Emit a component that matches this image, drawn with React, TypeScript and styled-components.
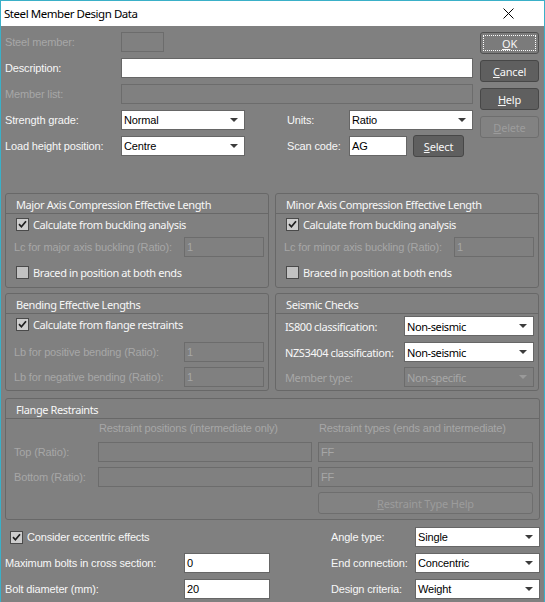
import React from "react";
import styled, { createGlobalStyle, css } from "styled-components";

const MS = `"Liberation Sans", Arial, sans-serif`;
const UI = `"Noto Sans", "Open Sans", sans-serif`;

const BG = "#808080";
const TXT = "#f7f7f7";
const DIS = "#a7a7a7";
const LINE = "#686868";

const Global = createGlobalStyle`
  html, body { margin: 0; padding: 0; background: ${BG}; }
  * { box-sizing: border-box; }
`;

const uiFont = css`
  font-family: ${UI};
  font-size: 11px;
  letter-spacing: -0.4px;
`;

const msFont = css`
  font-family: ${MS};
  font-size: 11px;
  letter-spacing: -0.15px;
`;

const Window = styled.div`
  width: 545px;
  height: 602px;
  background: ${BG};
  border: 1px solid #3ab0c8;
  border-bottom: none;
  display: flex;
  flex-direction: column;
  overflow: hidden;
`;

const TitleBar = styled.div`
  height: 25px;
  flex-shrink: 0;
  background: #fff;
  display: flex;
  align-items: center;
  justify-content: space-between;
  padding: 0 30px 0 3px;
  font-family: ${UI};
  font-size: 11.5px;
  letter-spacing: -0.45px;
  color: #000;
`;

const Body = styled.div`
  display: flex;
  flex-direction: column;
  padding: 6px 4px 0 4px;
`;

const TopSection = styled.div`
  display: flex;
  align-items: flex-start;
  gap: 7px;
`;

const Form = styled.div`
  width: 468px;
  display: flex;
  flex-direction: column;
  gap: 6px;
`;

const Row = styled.div`
  display: flex;
  align-items: center;
  height: 20px;
`;

const Label = styled.span<{ $w?: number; $dis?: boolean; $ui?: boolean; $ml?: number }>`
  ${(p) => (p.$w ? `width: ${p.$w}px; flex-shrink: 0;` : "flex: 1;")}
  margin-left: ${(p) => p.$ml ?? 0}px;
  ${(p) => (p.$ui ? uiFont : msFont)}
  color: ${(p) => (p.$dis ? DIS : TXT)};
  white-space: nowrap;
`;

const fieldBase = css<{ $w?: number; $dis?: boolean }>`
  height: 20px;
  ${(p) => (p.$w ? `width: ${p.$w}px; flex-shrink: 0;` : "flex: 1;")}
  border: 1px solid ${(p) => (p.$dis ? "#6c6c6c" : "#666")};
  background: ${(p) => (p.$dis ? "transparent" : "#fff")};
  color: ${(p) => (p.$dis ? DIS : "#000")};
  ${msFont}
  display: flex;
  align-items: center;
  padding: 0 2px;
  white-space: nowrap;
`;

const TextBox = styled.div<{ $w?: number; $dis?: boolean }>`
  ${fieldBase}
`;

const ComboBox = styled.div<{ $w?: number; $dis?: boolean; $ui?: boolean }>`
  ${fieldBase}
  ${(p) => (p.$ui ? uiFont : "")}
  justify-content: space-between;
  padding-right: 6px;
`;

const Arrow = styled.span<{ $dis?: boolean }>`
  width: 0;
  height: 0;
  border-left: 4px solid transparent;
  border-right: 4px solid transparent;
  border-top: 4px solid ${(p) => (p.$dis ? "#9a9a9a" : "#3c3c3c")};
`;

const ButtonCol = styled.div`
  width: 59px;
  display: flex;
  flex-direction: column;
  gap: 6px;
`;

const Btn = styled.div<{ $w?: number; $kind?: "normal" | "default" | "disabled"; $ml?: number; $grow?: boolean }>`
  height: 22px;
  ${(p) => (p.$w ? `width: ${p.$w}px; flex-shrink: 0;` : "")}
  ${(p) => (p.$grow ? "flex: 1;" : "")}
  margin-left: ${(p) => p.$ml ?? 0}px;
  border-radius: 3px;
  display: flex;
  align-items: stretch;
  ${uiFont}
  letter-spacing: -0.2px;
  ${(p) =>
    p.$kind === "default"
      ? css`
          background: #7b7b7b;
          border: 1px solid #505050;
          color: ${TXT};
          padding: 2px;
        `
      : p.$kind === "disabled"
      ? css`
          background: #828282;
          border: 1px solid #6e6e6e;
          color: #9c9c9c;
          padding: 0;
        `
      : css`
          background: #5f5f5f;
          border: 1px solid #474747;
          color: ${TXT};
          padding: 0;
        `}
`;

const BtnFace = styled.span<{ $focus?: boolean }>`
  flex: 1;
  display: flex;
  align-items: center;
  justify-content: center;
  border: 1px dotted ${(p) => (p.$focus ? "#ffffff" : "transparent")};
`;

const GroupGrid = styled.div`
  margin-top: 37px;
  display: grid;
  grid-template-columns: 264px 264px;
  grid-template-rows: 95px 98px;
  column-gap: 6px;
  row-gap: 5px;
`;

const Group = styled.div<{ $h?: number; $mt?: number }>`
  border: 1px solid ${LINE};
  border-radius: 3px;
  display: flex;
  flex-direction: column;
  ${(p) => (p.$h ? `height: ${p.$h}px;` : "")}
  margin-top: ${(p) => p.$mt ?? 0}px;
`;

const GroupHeader = styled.div`
  height: 20px;
  border-bottom: 1px solid ${LINE};
  padding: 1px 0 0 10px;
  display: flex;
  align-items: center;
  ${uiFont}
  color: ${TXT};
`;

const GroupBody = styled.div<{ $pl?: number }>`
  display: flex;
  flex-direction: column;
  padding: 0 4px 0 ${(p) => p.$pl ?? 8}px;
`;

const FieldRow = styled.div<{ $mt?: number; $h?: number }>`
  display: flex;
  align-items: center;
  height: ${(p) => p.$h ?? 20}px;
  margin-top: ${(p) => p.$mt ?? 0}px;
`;

const CheckRow = styled.label<{ $mt?: number; $pl?: number; $ui?: boolean }>`
  display: flex;
  align-items: center;
  gap: 4px;
  height: 21px;
  margin-top: ${(p) => p.$mt ?? 0}px;
  padding-left: ${(p) => p.$pl ?? 2}px;
  ${(p) => (p.$ui ? uiFont : msFont)}
  color: ${TXT};
  white-space: nowrap;
`;

const Box = styled.span<{ $on?: boolean }>`
  width: 13px;
  height: 13px;
  flex-shrink: 0;
  border: 1px solid #4a4a4a;
  background: ${(p) => (p.$on ? "#cdcdcd" : "#c2c2c2")};
  display: flex;
  align-items: center;
  justify-content: center;
`;

const FlangeBody = styled.div`
  display: grid;
  grid-template-columns: 78px 214px 215px;
  grid-template-rows: 18px 20px 20px 22px;
  column-gap: 6px;
  row-gap: 5px;
  padding: 0 5px 0 8px;
  align-items: center;
`;

const Cell = styled.div<{ $col?: string; $pl?: number }>`
  grid-column: ${(p) => p.$col ?? "auto"};
  padding-left: ${(p) => p.$pl ?? 0}px;
  display: flex;
  align-items: center;
  min-width: 0;
`;

const BottomGrid = styled.div`
  margin-top: 7px;
  display: grid;
  grid-template-columns: 179px 86px 61px 84px 125px;
  grid-template-rows: 20px 20px 20px;
  row-gap: 6px;
  align-items: center;
`;

const Check = ({ on }: { on?: boolean }) => (
  <Box $on={on}>
    {on && (
      <svg width="9" height="9" viewBox="0 0 9 9">
        <path d="M1 4.2 L3.4 6.8 L8 1.2" stroke="#1e1e1e" strokeWidth="1.7" fill="none" />
      </svg>
    )}
  </Box>
);

const Close = () => (
  <svg width="11" height="11" viewBox="0 0 11 11">
    <path d="M0.5 0.5 L10.5 10.5 M10.5 0.5 L0.5 10.5" stroke="#000" strokeWidth="1" />
  </svg>
);

export default function App() {
  return (
    <>
      <Global />
      <Window>
        <TitleBar>
          <span>Steel Member Design Data</span>
          <Close />
        </TitleBar>
        <Body>
          <TopSection>
            <Form>
              <Row>
                <Label $w={116} $dis>Steel member:</Label>
                <TextBox $w={43} $dis />
              </Row>
              <Row>
                <Label $w={116}>Description:</Label>
                <TextBox />
              </Row>
              <Row>
                <Label $w={116} $dis>Member list:</Label>
                <TextBox $dis />
              </Row>
              <Row>
                <Label $w={116}>Strength grade:</Label>
                <ComboBox $w={124}>
                  <span>Normal</span>
                  <Arrow />
                </ComboBox>
                <Label $w={62} $ml={42}>Units:</Label>
                <ComboBox $w={124}>
                  <span>Ratio</span>
                  <Arrow />
                </ComboBox>
              </Row>
              <Row>
                <Label $w={116}>Load height position:</Label>
                <ComboBox $w={124}>
                  <span>Centre</span>
                  <Arrow />
                </ComboBox>
                <Label $w={62} $ml={42}>Scan code:</Label>
                <TextBox $w={58}>AG</TextBox>
                <Btn $w={51} $ml={6}>
                  <BtnFace>
                    <span><u>S</u>elect</span>
                  </BtnFace>
                </Btn>
              </Row>
            </Form>
            <ButtonCol>
              <Btn $kind="default">
                <BtnFace $focus>
                  <span><u>O</u>K</span>
                </BtnFace>
              </Btn>
              <Btn>
                <BtnFace>
                  <span><u>C</u>ancel</span>
                </BtnFace>
              </Btn>
              <Btn>
                <BtnFace>
                  <span><u>H</u>elp</span>
                </BtnFace>
              </Btn>
              <Btn $kind="disabled">
                <BtnFace>
                  <span><u>D</u>elete</span>
                </BtnFace>
              </Btn>
            </ButtonCol>
          </TopSection>

          <GroupGrid>
            <Group>
              <GroupHeader>Major Axis Compression Effective Length</GroupHeader>
              <GroupBody>
                <CheckRow $ui>
                  <Check on />
                  Calculate from buckling analysis
                </CheckRow>
                <FieldRow $mt={2}>
                  <Label $dis>Lc for major axis buckling (Ratio):</Label>
                  <TextBox $w={80} $dis>1</TextBox>
                </FieldRow>
                <CheckRow $ui $mt={5}>
                  <Check />
                  Braced in position at both ends
                </CheckRow>
              </GroupBody>
            </Group>
            <Group>
              <GroupHeader>Minor Axis Compression Effective Length</GroupHeader>
              <GroupBody>
                <CheckRow $ui>
                  <Check on />
                  Calculate from buckling analysis
                </CheckRow>
                <FieldRow $mt={2}>
                  <Label $dis>Lc for minor axis buckling (Ratio):</Label>
                  <TextBox $w={80} $dis>1</TextBox>
                </FieldRow>
                <CheckRow $ui $mt={5}>
                  <Check />
                  Braced in position at both ends
                </CheckRow>
              </GroupBody>
            </Group>
            <Group>
              <GroupHeader>Bending Effective Lengths</GroupHeader>
              <GroupBody>
                <CheckRow $ui>
                  <Check on />
                  Calculate from flange restraints
                </CheckRow>
                <FieldRow $mt={7}>
                  <Label $dis>Lb for positive bending (Ratio):</Label>
                  <TextBox $w={80} $dis>1</TextBox>
                </FieldRow>
                <FieldRow $mt={5}>
                  <Label $dis>Lb for negative bending (Ratio):</Label>
                  <TextBox $w={80} $dis>1</TextBox>
                </FieldRow>
              </GroupBody>
            </Group>
            <Group>
              <GroupHeader>Seismic Checks</GroupHeader>
              <GroupBody $pl={9}>
                <FieldRow $mt={2}>
                  <Label $ui>IS800 classification:</Label>
                  <ComboBox $w={130} $ui>
                    <span>Non-seismic</span>
                    <Arrow />
                  </ComboBox>
                </FieldRow>
                <FieldRow $mt={6}>
                  <Label $ui>NZS3404 classification:</Label>
                  <ComboBox $w={130} $ui>
                    <span>Non-seismic</span>
                    <Arrow />
                  </ComboBox>
                </FieldRow>
                <FieldRow $mt={5}>
                  <Label $ui $dis>Member type:</Label>
                  <ComboBox $w={130} $ui $dis>
                    <span>Non-specific</span>
                    <Arrow $dis />
                  </ComboBox>
                </FieldRow>
              </GroupBody>
            </Group>
          </GroupGrid>

          <Group $h={122} $mt={7}>
            <GroupHeader>Flange Restraints</GroupHeader>
            <FlangeBody>
              <Cell />
              <Cell $pl={1}>
                <Label $dis>Restraint positions (intermediate only)</Label>
              </Cell>
              <Cell $pl={1}>
                <Label $dis>Restraint types (ends and intermediate)</Label>
              </Cell>
              <Cell>
                <Label $dis>Top (Ratio):</Label>
              </Cell>
              <TextBox $dis />
              <TextBox $dis>FF</TextBox>
              <Cell>
                <Label $dis>Bottom (Ratio):</Label>
              </Cell>
              <TextBox $dis />
              <TextBox $dis>FF</TextBox>
              <Cell $col="3">
                <Btn $kind="disabled" $grow>
                  <BtnFace>
                    <span><u>R</u>estraint Type Help</span>
                  </BtnFace>
                </Btn>
              </Cell>
            </FlangeBody>
          </Group>

          <BottomGrid>
            <Cell $col="1 / span 3">
              <CheckRow $pl={5}>
                <Check on />
                Consider eccentric effects
              </CheckRow>
            </Cell>
            <Label>Angle type:</Label>
            <ComboBox>
              <span>Single</span>
              <Arrow />
            </ComboBox>
            <Label>Maximum bolts in cross section:</Label>
            <TextBox>0</TextBox>
            <span />
            <Label>End connection:</Label>
            <ComboBox>
              <span>Concentric</span>
              <Arrow />
            </ComboBox>
            <Label>Bolt diameter (mm):</Label>
            <TextBox>20</TextBox>
            <span />
            <Label>Design criteria:</Label>
            <ComboBox>
              <span>Weight</span>
              <Arrow />
            </ComboBox>
          </BottomGrid>
        </Body>
      </Window>
    </>
  );
}
